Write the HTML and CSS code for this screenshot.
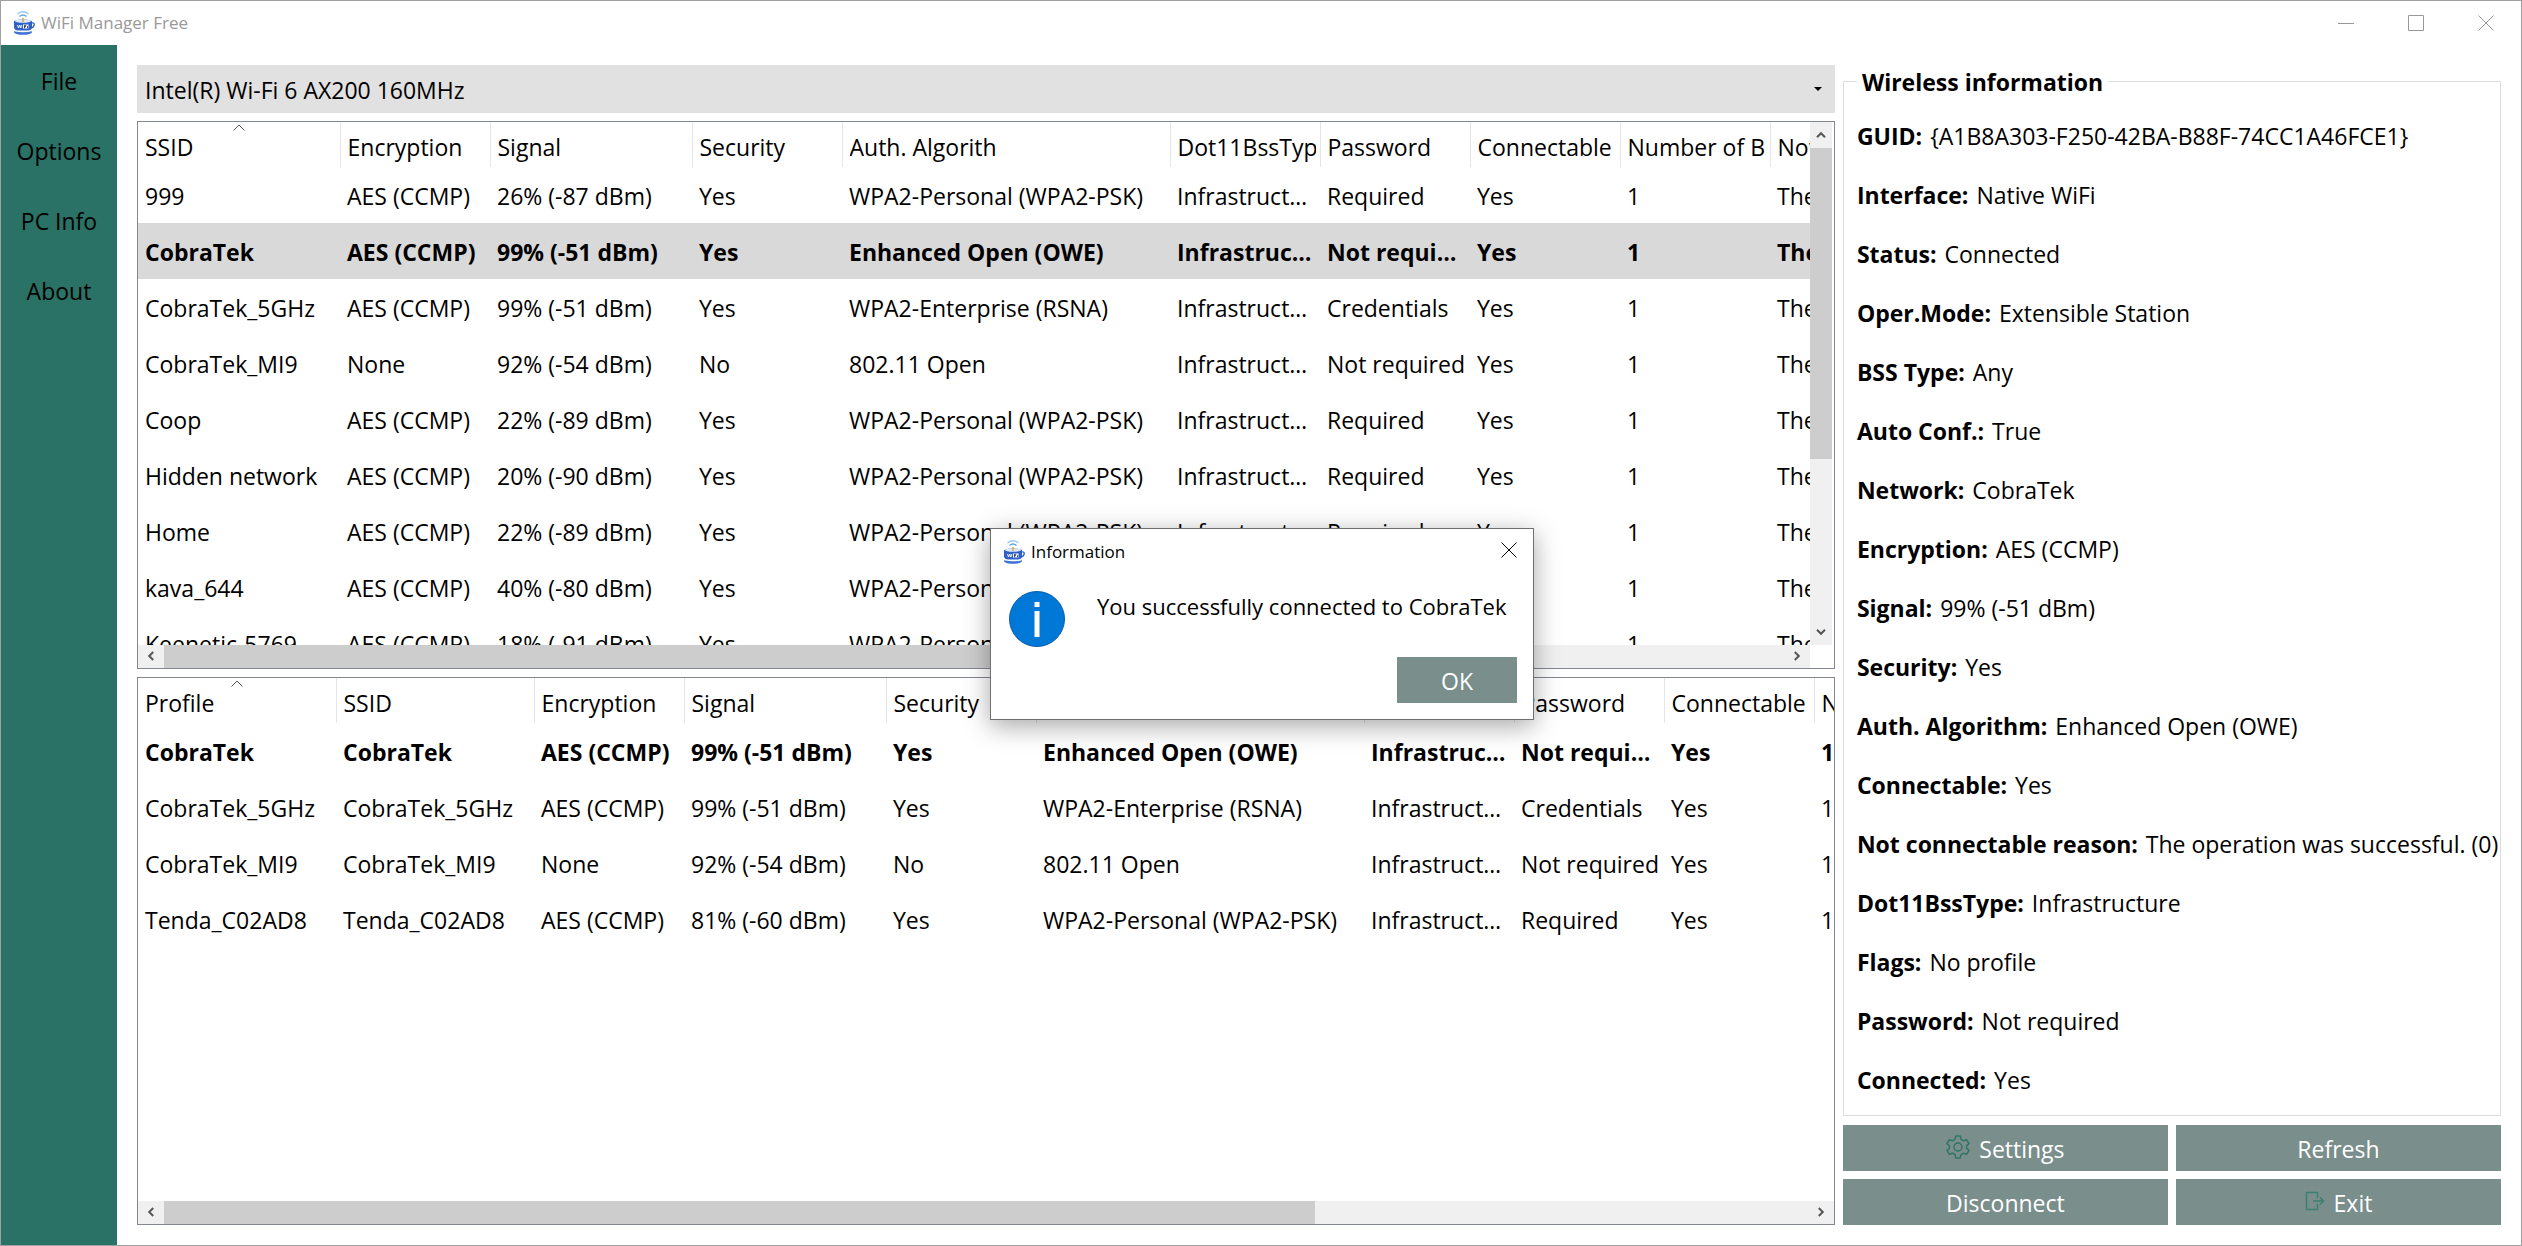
FILE: index.html
```
<!DOCTYPE html>
<html lang="en">
<head>
    <meta charset="UTF-8">
    <meta name="viewport" content="width=device-width, initial-scale=1.0">
    <title>WiFi Manager Free</title>
    <link rel="stylesheet" href="styles.css">
</head>
<body>
    <svg class="defs" aria-hidden="true">
        <symbol id="logo" viewBox="0 0 22 24">
            <path d="M4.500 3Q10 -1.500 15.500 3" fill="none" stroke="#9cc8f0" stroke-width="1.4"/>
            <path d="M6.500 5.500Q10 2.500 13.500 5.500" fill="none" stroke="#5aa5e6" stroke-width="1.4"/>
            <path d="M1 10Q10 6.500 19 10V17Q18 19.500 15 19.500H5Q2 19.500 1 17Z" fill="#2f62c4"/>
            <ellipse cx="10" cy="10" rx="8" ry="1.800" fill="#dbe8fa"/>
            <rect x="9" y="7" width="2" height="4" fill="#d9b66a"/>
            <path d="M18.500 12Q22 11.500 21 14.500Q20.500 16.500 18 17" fill="none" stroke="#2f62c4" stroke-width="1.400"/>
            <rect x="10" y="13.500" width="5.500" height="4" fill="#fff"/>
            <path d="M4.500 14L5.500 17L6.700 14L7.800 17L8.800 14" fill="none" stroke="#fff" stroke-width=".9"/>
            <path d="M11.500 17.200V14.300H13.300M11.500 15.700H13M14.500 15.200V17.200" fill="none" stroke="#1c2f63" stroke-width=".9"/>
            <path d="M1 20.200Q10 22.500 19 20.200V21.500Q17 23.800 10 23.800T1 21.500Z" fill="#3f74d6"/>
        </symbol>
        <symbol id="close" viewBox="0 0 16 16">
            <path d="M.5.5L15.500 15.500M15.500.5L.5 15.500" fill="none" stroke="currentColor"/>
        </symbol>
        <symbol id="sort" viewBox="0 0 12 7">
            <path d="M.5 6.500L6 1L11.500 6.500" fill="none" stroke="#555"/>
        </symbol>
        <symbol id="arrow" viewBox="0 0 10 10">
            <path d="M1 7.200L5 3.200L9 7.200" fill="none" stroke="#555" stroke-width="2"/>
        </symbol>
    </svg>

    <div class="window">
        <header class="titlebar">
            <svg class="logo"><use href="#logo"/></svg>
            <span class="app-name">WiFi Manager Free</span>
            <button class="win-btn" aria-label="Minimize"><svg width="16" height="16"><path d="M0 8.500H16" stroke="currentColor"/></svg></button>
            <button class="win-btn" aria-label="Maximize"><svg width="16" height="16"><path d="M.5.5H15.500V15.500H.5Z" fill="none" stroke="currentColor"/></svg></button>
            <button class="win-btn" aria-label="Close"><svg width="16" height="16"><use href="#close"/></svg></button>
        </header>

        <div class="body">
            <nav class="sidebar">
                <button>File</button>
                <button>Options</button>
                <button>PC Info</button>
                <button>About</button>
            </nav>

            <main class="lists">
                <select class="adapter" aria-label="Adapter">
                    <option>Intel(R) Wi-Fi 6 AX200 160MHz</option>
                </select>

                <section class="list has-vscroll">
                    <div class="view">
                        <table>
                            <colgroup>
                                <col class="w-name"><col class="w-std"><col class="w-signal"><col class="w-std"><col class="w-auth">
                                <col class="w-std"><col class="w-std"><col class="w-std"><col class="w-std"><col class="w-auth">
                            </colgroup>
                            <thead>
                                <tr><th class="sorted">SSID<svg class="sort"><use href="#sort"/></svg></th><th>Encryption</th><th>Signal</th><th>Security</th><th>Auth. Algorith</th><th>Dot11BssType</th><th>Password</th><th>Connectable</th><th>Number of BSSIDs</th><th>Not connectable reason</th></tr>
                            </thead>
                            <tbody>
                                <tr><td>999</td><td>AES (CCMP)</td><td>26% (-87 dBm)</td><td>Yes</td><td>WPA2-Personal (WPA2-PSK)</td><td>Infrastructure</td><td>Required</td><td>Yes</td><td>1</td><td>The operation was</td></tr>
                                <tr class="active selected"><td>CobraTek</td><td>AES (CCMP)</td><td>99% (-51 dBm)</td><td>Yes</td><td>Enhanced Open (OWE)</td><td>Infrastructure</td><td>Not required</td><td>Yes</td><td>1</td><td>The operation was</td></tr>
                                <tr><td>CobraTek_5GHz</td><td>AES (CCMP)</td><td>99% (-51 dBm)</td><td>Yes</td><td>WPA2-Enterprise (RSNA)</td><td>Infrastructure</td><td>Credentials</td><td>Yes</td><td>1</td><td>The operation was</td></tr>
                                <tr><td>CobraTek_MI9</td><td>None</td><td>92% (-54 dBm)</td><td>No</td><td>802.11 Open</td><td>Infrastructure</td><td>Not required</td><td>Yes</td><td>1</td><td>The operation was</td></tr>
                                <tr><td>Coop</td><td>AES (CCMP)</td><td>22% (-89 dBm)</td><td>Yes</td><td>WPA2-Personal (WPA2-PSK)</td><td>Infrastructure</td><td>Required</td><td>Yes</td><td>1</td><td>The operation was</td></tr>
                                <tr><td>Hidden network</td><td>AES (CCMP)</td><td>20% (-90 dBm)</td><td>Yes</td><td>WPA2-Personal (WPA2-PSK)</td><td>Infrastructure</td><td>Required</td><td>Yes</td><td>1</td><td>The operation was</td></tr>
                                <tr><td>Home</td><td>AES (CCMP)</td><td>22% (-89 dBm)</td><td>Yes</td><td>WPA2-Personal (WPA2-PSK)</td><td>Infrastructure</td><td>Required</td><td>Yes</td><td>1</td><td>The operation was</td></tr>
                                <tr><td>kava_644</td><td>AES (CCMP)</td><td>40% (-80 dBm)</td><td>Yes</td><td>WPA2-Personal (WPA2-PSK)</td><td>Infrastructure</td><td>Required</td><td>Yes</td><td>1</td><td>The operation was</td></tr>
                                <tr><td>Keenetic-5769</td><td>AES (CCMP)</td><td>18% (-91 dBm)</td><td>Yes</td><td>WPA2-Personal (WPA2-PSK)</td><td>Infrastructure</td><td>Required</td><td>Yes</td><td>1</td><td>The operation was</td></tr>
                            </tbody>
                        </table>
                    </div>
                    <div class="vscroll">
                        <button aria-label="Scroll up"><svg><use href="#arrow"/></svg></button>
                        <div class="track"><div class="thumb"></div></div>
                        <button class="down" aria-label="Scroll down"><svg><use href="#arrow"/></svg></button>
                    </div>
                    <div class="hscroll">
                        <button class="left" aria-label="Scroll left"><svg><use href="#arrow"/></svg></button>
                        <div class="track"><div class="thumb"></div></div>
                        <button class="right" aria-label="Scroll right"><svg><use href="#arrow"/></svg></button>
                    </div>
                </section>

                <section class="list">
                    <div class="view">
                        <table>
                            <colgroup>
                                <col class="w-profile"><col class="w-profile"><col class="w-std"><col class="w-signal"><col class="w-std">
                                <col class="w-auth"><col class="w-std"><col class="w-std"><col class="w-std"><col class="w-std">
                            </colgroup>
                            <thead>
                                <tr><th class="sorted">Profile<svg class="sort"><use href="#sort"/></svg></th><th>SSID</th><th>Encryption</th><th>Signal</th><th>Security</th><th>Auth. Algorith</th><th>Dot11BssType</th><th>Password</th><th>Connectable</th><th>Number of BSSIDs</th></tr>
                            </thead>
                            <tbody>
                                <tr class="active"><td>CobraTek</td><td>CobraTek</td><td>AES (CCMP)</td><td>99% (-51 dBm)</td><td>Yes</td><td>Enhanced Open (OWE)</td><td>Infrastructure</td><td>Not required</td><td>Yes</td><td>1</td></tr>
                                <tr><td>CobraTek_5GHz</td><td>CobraTek_5GHz</td><td>AES (CCMP)</td><td>99% (-51 dBm)</td><td>Yes</td><td>WPA2-Enterprise (RSNA)</td><td>Infrastructure</td><td>Credentials</td><td>Yes</td><td>1</td></tr>
                                <tr><td>CobraTek_MI9</td><td>CobraTek_MI9</td><td>None</td><td>92% (-54 dBm)</td><td>No</td><td>802.11 Open</td><td>Infrastructure</td><td>Not required</td><td>Yes</td><td>1</td></tr>
                                <tr><td>Tenda_C02AD8</td><td>Tenda_C02AD8</td><td>AES (CCMP)</td><td>81% (-60 dBm)</td><td>Yes</td><td>WPA2-Personal (WPA2-PSK)</td><td>Infrastructure</td><td>Required</td><td>Yes</td><td>1</td></tr>
                            </tbody>
                        </table>
                    </div>
                    <div class="hscroll">
                        <button class="left" aria-label="Scroll left"><svg><use href="#arrow"/></svg></button>
                        <div class="track"><div class="thumb long"></div></div>
                        <button class="right" aria-label="Scroll right"><svg><use href="#arrow"/></svg></button>
                    </div>
                </section>
            </main>

            <aside class="details">
                <fieldset class="info">
                    <legend>Wireless information</legend>
                    <p><b>GUID:</b> {A1B8A303-F250-42BA-B88F-74CC1A46FCE1}</p>
                    <p><b>Interface:</b> Native WiFi</p>
                    <p><b>Status:</b> Connected</p>
                    <p><b>Oper.Mode:</b> Extensible Station</p>
                    <p><b>BSS Type:</b> Any</p>
                    <p><b>Auto Conf.:</b> True</p>
                    <p><b>Network:</b> CobraTek</p>
                    <p><b>Encryption:</b> AES (CCMP)</p>
                    <p><b>Signal:</b> 99% (-51 dBm)</p>
                    <p><b>Security:</b> Yes</p>
                    <p><b>Auth. Algorithm:</b> Enhanced Open (OWE)</p>
                    <p><b>Connectable:</b> Yes</p>
                    <p><b>Not connectable reason:</b> The operation was successful. (0)</p>
                    <p><b>Dot11BssType:</b> Infrastructure</p>
                    <p><b>Flags:</b> No profile</p>
                    <p><b>Password:</b> Not required</p>
                    <p><b>Connected:</b> Yes</p>
                </fieldset>
                <div class="actions">
                    <button class="btn">
                        <svg width="24" height="24" viewBox="0 0 24 24" fill="none" stroke="#2f7568" stroke-width="1.500" stroke-linejoin="round">
                            <path d="M9.800 1H14.200L15 4.300L17.600 5.800L20.800 4.800L23 8.600L20.600 10.800V13.200L23 15.400L20.800 19.200L17.600 18.200L15 19.700L14.200 23H9.800L9 19.700L6.400 18.200L3.200 19.200L1 15.400L3.400 13.200V10.800L1 8.600L3.200 4.800L6.400 5.800L9 4.300Z"/>
                            <circle cx="12" cy="12" r="4"/>
                        </svg>
                        Settings
                    </button>
                    <button class="btn">Refresh</button>
                    <button class="btn">Disconnect</button>
                    <button class="btn">
                        <svg width="20" height="20" viewBox="0 0 20 20" fill="none" stroke="#3a8072" stroke-width="1.500">
                            <path d="M12.500 7V1.500H1.500V18.500H12.500V13M8 10H18M15 6.500L18.500 10L15 13.500"/>
                        </svg>
                        Exit
                    </button>
                </div>
            </aside>
        </div>
    </div>

    <dialog class="message" open aria-labelledby="message-title">
        <div class="message-bar">
            <svg class="logo"><use href="#logo"/></svg>
            <span id="message-title">Information</span>
            <button aria-label="Close"><svg width="16" height="16"><use href="#close"/></svg></button>
        </div>
        <div class="message-text">
            <svg width="56" height="56" viewBox="0 0 56 56">
                <circle cx="28" cy="28" r="27.500" fill="#0078d7" stroke="#0a5ca8"/>
                <path d="M25.500 11H30.500V16H25.500ZM25.500 20H30.500V46H25.500Z" fill="#fff"/>
            </svg>
            <p>You successfully connected to CobraTek</p>
        </div>
        <button class="btn ok">OK</button>
    </dialog>
</body>
</html>
```
FILE: styles.css
```
* {
    box-sizing: border-box;
}
body {
    margin: 0;
    font-family: "Open Sans", "Noto Sans", sans-serif;
    font-size: 23px;
    line-height: 30px;
    color: #000;
    background: #fff;
}
button, select {
    font: inherit;
    color: inherit;
    border: none;
    border-radius: 0;
    background: none;
    padding: 0;
}
p {
    margin: 0;
    white-space: nowrap;
}
.defs {
    display: none;
}
.logo {
    width: 22px;
    height: 24px;
}

/* window frame */
.window {
    height: 100vh;
    border: 1px solid #a0a0a0;
    display: flex;
    flex-direction: column;
}
.titlebar {
    height: 44px;
    flex: none;
    display: flex;
    align-items: center;
    padding-left: 12px;
    font-size: 17px;
    color: #999;
}
.app-name {
    flex: 1;
    padding-left: 6px;
}
.win-btn {
    width: 70px;
    height: 44px;
    display: flex;
    align-items: center;
    justify-content: center;
}
.body {
    flex: 1;
    min-height: 0;
    display: flex;
}

/* left menu */
.sidebar {
    width: 116px;
    flex: none;
    background: #2a7265;
    display: flex;
    flex-direction: column;
    padding-top: 1px;
}
.sidebar button {
    height: 70px;
}

/* network lists */
.lists {
    flex: 258;
    min-width: 0;
    display: flex;
    flex-direction: column;
    gap: 8px;
    padding: 20px 0 20px 20px;
}
.adapter {
    height: 48px;
    flex: none;
    padding: 2px 12px 0 8px;
    appearance: none;
    background: #e1e1e1 url("data:image/svg+xml,%3Csvg xmlns='http://www.w3.org/2000/svg' width='8' height='4'%3E%3Cpath d='M0 0H8L4 4Z'/%3E%3C/svg%3E") no-repeat right 13px center;
}
.list {
    flex: 1;
    min-height: 0;
    display: grid;
    grid-template-columns: minmax(0, 1fr);
    grid-template-rows: minmax(0, 1fr) 23px;
    border: 1px solid #828790;
}
.has-vscroll {
    grid-template-columns: minmax(0, 1fr) 24px;
}
.view {
    overflow: hidden;
    padding-right: 1px;
}
table {
    table-layout: fixed;
    width: 0;
    border-collapse: collapse;
}
.w-name, .w-signal {
    width: 202px;
}
.w-profile {
    width: 198px;
}
.w-std {
    width: 150px;
}
.w-auth {
    width: 328px;
}
th, td {
    padding: 2px 4px 0 7px;
    text-align: left;
    font-weight: normal;
    white-space: nowrap;
    overflow: hidden;
    text-overflow: ellipsis;
}
th {
    height: 45px;
    padding-top: 4px;
    text-overflow: clip;
    overflow: clip;
    overflow-clip-margin: content-box;
    border-right: 1px solid #e5e5e5;
}
td {
    height: 56px;
}
.sorted {
    position: relative;
    overflow: visible;
}
.sort {
    position: absolute;
    top: 2px;
    left: calc(50% - 6px);
    width: 12px;
    height: 7px;
}
.active td {
    font-weight: bold;
}
.selected {
    background: #d9d9d9;
}

/* scroll bars */
.hscroll, .vscroll {
    display: flex;
    background: #f0f0f0;
}
.vscroll {
    flex-direction: column;
    margin-right: 2px;
}
.hscroll button, .vscroll button {
    width: 26px;
    height: 22px;
    flex: none;
    display: flex;
    align-items: center;
    justify-content: center;
}
.vscroll button {
    width: 22px;
    height: 26px;
}
.hscroll svg, .vscroll svg {
    width: 10px;
    height: 10px;
}
.left svg {
    transform: rotate(-90deg);
}
.right svg {
    transform: rotate(90deg);
}
.down svg {
    transform: rotate(180deg);
}
.track {
    flex: 1;
}
.thumb {
    background: #cdcdcd;
    height: 100%;
    width: 62%;
}
.vscroll .thumb {
    width: 100%;
    height: 66%;
}
.thumb.long {
    width: 70%;
}

/* right side */
.details {
    flex: 100;
    min-width: 0;
    display: flex;
    flex-direction: column;
    gap: 9px;
    padding: 20px 20px 20px 8px;
}
.info {
    flex: 1;
    min-width: 0;
    min-height: 0;
    margin: 0;
    padding: 10px 4px 6px 13px;
    border: 1px solid #dcdcdc;
    display: grid;
    grid-auto-rows: minmax(0, 1fr);
    align-items: center;
}
.info legend {
    padding: 2px 5px 0;
    font-weight: bold;
}
.info b {
    margin-right: 2px;
}
.actions {
    display: grid;
    grid-template-columns: 1fr 1fr;
    gap: 8px;
}
.btn {
    height: 46px;
    display: flex;
    align-items: center;
    justify-content: center;
    gap: 9px;
    padding-top: 2px;
    color: #fff;
    background: #7a8e8c;
}
.btn svg {
    margin-bottom: 4px;
}

/* message box */
.message {
    position: absolute;
    inset: 2px 0 0 2px;
    margin: auto;
    width: 544px;
    height: fit-content;
    padding: 0 16px 16px;
    border: 1px solid #707070;
    background: #fff;
    color: #000;
    box-shadow: 0 6px 24px rgba(0, 0, 0, .35);
}
.message-bar {
    height: 46px;
    display: flex;
    align-items: center;
    gap: 6px;
    margin-left: -4px;
    font-size: 17px;
}
.message-bar span {
    flex: 1;
}
.message-text {
    display: flex;
    gap: 32px;
    padding: 16px 0 10px 2px;
}
.message-text p {
    font-size: 22px;
}
.ok {
    width: 120px;
    margin-left: auto;
}
```
